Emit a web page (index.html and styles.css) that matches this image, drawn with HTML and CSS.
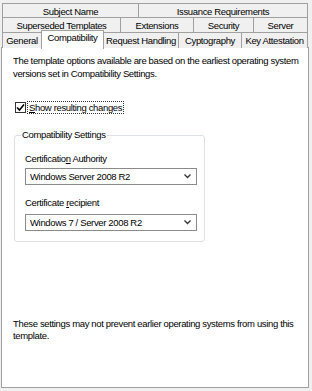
FILE: index.html
```html
<!DOCTYPE html>
<html>
<head>
<title>Template Properties - Compatibility</title>
<link rel="stylesheet" href="styles.css">
</head>
<body>
  <div class="tabs">
    <div class="tab-row row1">
      <div class="tab">Subject Name</div>
      <div class="tab">Issuance Requirements</div>
    </div>
    <div class="tab-row row2">
      <div class="tab">Superseded Templates</div>
      <div class="tab">Extensions</div>
      <div class="tab">Security</div>
      <div class="tab">Server</div>
    </div>
    <div class="tab-row row3">
      <div class="tab">General</div>
      <div class="tab selected">Compatibility</div>
      <div class="tab">Request Handling</div>
      <div class="tab">Cyptography</div>
      <div class="tab">Key Attestation</div>
    </div>
  </div>

  <div class="panel">
    <p class="intro">
      The template options available are based on the earliest operating system
      versions set in Compatibility Settings.
    </p>

    <div class="check-line">
      <span class="checkbox">
        <svg width="9" height="9" viewBox="0 0 9 9">
          <path d="M1 4.5 L3.5 7 L8 1.5" fill="none" stroke="#000" stroke-width="1.6"/>
        </svg>
      </span>
      <span class="check-label"><u>S</u>how resulting changes</span>
    </div>

    <fieldset class="group">
      <legend>Compatibility Settings</legend>
      <div class="field-label">Certificatio<u>n</u> Authority</div>
      <div class="select">
        <span>Windows Server 2008 R2</span>
        <svg width="7" height="5" viewBox="0 0 7 5">
          <path d="M0.5 0.5 L3.5 3.5 L6.5 0.5" fill="none" stroke="#333" stroke-width="1.3"/>
        </svg>
      </div>
      <div class="field-label second">Certificate <u>r</u>ecipient</div>
      <div class="select second">
        <span>Windows 7 / Server 2008 R2</span>
        <svg width="7" height="5" viewBox="0 0 7 5">
          <path d="M0.5 0.5 L3.5 3.5 L6.5 0.5" fill="none" stroke="#333" stroke-width="1.3"/>
        </svg>
      </div>
    </fieldset>

    <p class="note">
      These settings may not prevent earlier operating systems from using this
      template.
    </p>
  </div>
</body>
</html>
```

FILE: styles.css
```css
body {
  margin: 0;
  background: #f0f0f0;
  font-family: "Liberation Sans", Arial, sans-serif;
  font-size: 9.5px;
  letter-spacing: -0.35px;
  color: #000;
  width: 312px;
  height: 391px;
  overflow: hidden;
}

.tabs {
  padding: 3px 4px 0 2px;
}
.tab-row {
  display: grid;
  height: 15px;
}
.row1 {
  height: 14px;
  grid-template-columns: 136px 1fr;
}
.row2 {
  grid-template-columns: 118px 73px 60px 1fr;
}
.row3 {
  grid-template-columns: 39px 62px 75px 63px 1fr;
}
.tab {
  border: 1px solid #a0a0a0;
  border-right: none;
  border-bottom: none;
  background: #f0f0f0;
  text-align: center;
  line-height: 15px;
  white-space: nowrap;
}
.tab:last-child {
  border-right: 1px solid #a0a0a0;
}
.tab.selected {
  position: relative;
  z-index: 1;
  margin-top: -2px;
  margin-bottom: -1px;
  margin-right: -1px;
  background: #fff;
  border-right: 1px solid #a0a0a0;
  line-height: 14px;
}

.panel {
  margin-left: 1px;
  width: 295px;
  height: 339px;
  background: #fff;
  border: 1px solid #a0a0a0;
  display: flex;
  flex-direction: column;
  padding: 0 0 0 11px;
}
.intro {
  margin: 6px 0 0;
  line-height: 13px;
}

.check-line {
  display: flex;
  align-items: center;
  margin-top: 22px;
  margin-left: 2px;
}
.checkbox {
  width: 11px;
  height: 11px;
  border: 1px solid #333;
  box-sizing: border-box;
  display: flex;
  align-items: center;
  justify-content: center;
}
.check-label {
  margin-left: 2px;
  padding: 0 1px;
  outline: 1px dotted #333;
  line-height: 11px;
}

.group {
  margin: 16px 0 0 1px;
  width: 191px;
  height: 113px;
  box-sizing: border-box;
  border: 1px solid #dcdfe3;
  border-radius: 3px;
  padding: 0 7px 0 10px;
}
.group legend {
  padding: 0 1px;
  margin-left: -4px;
  line-height: 12px;
}
.field-label {
  margin-top: 12px;
  line-height: 12px;
}
.select {
  margin-top: 3px;
  height: 17px;
  box-sizing: border-box;
  border: 1px solid #8a8a8a;
  display: flex;
  align-items: center;
  justify-content: space-between;
  padding: 0 5px 0 4px;
}
.select.second {
  margin-top: 5px;
}

.note {
  margin: auto 0 45px;
  line-height: 12px;
}
```
